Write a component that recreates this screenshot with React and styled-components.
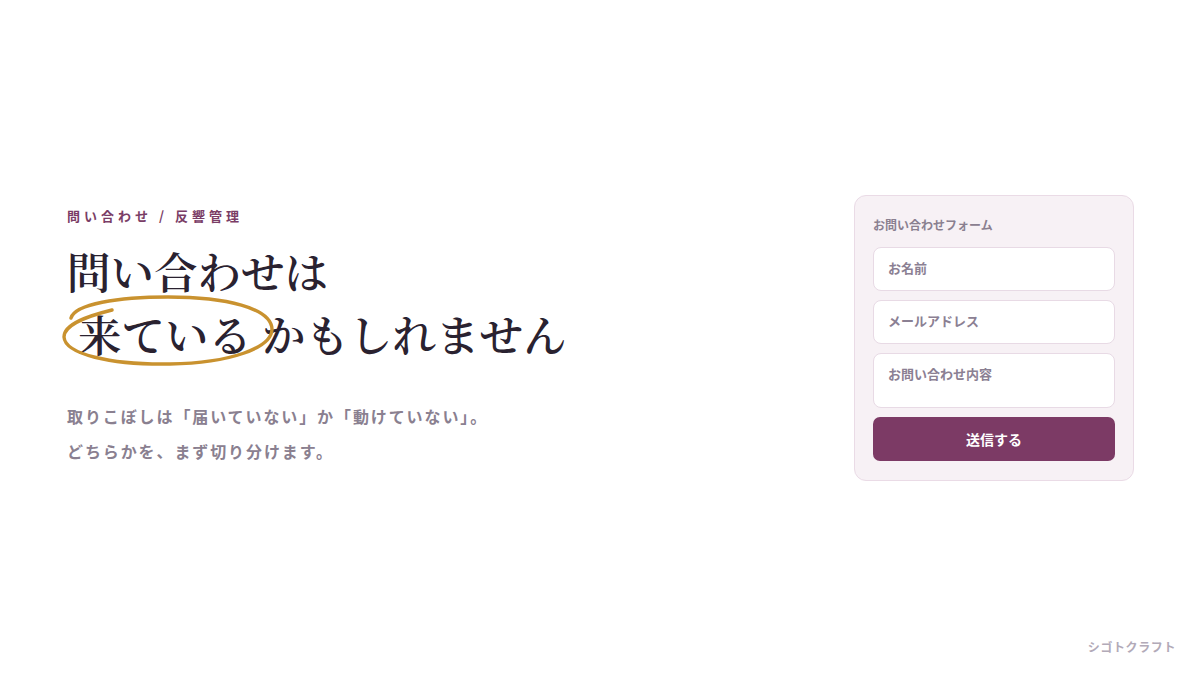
import styled, { createGlobalStyle } from "styled-components";

/* Estilos globales */
const GlobalStyle = createGlobalStyle`
  html, body {
    margin: 0;
    padding: 0;
    background: #ffffff;
  }

  body {
    font-family: "Noto Sans CJK JP", "Noto Sans", sans-serif;
  }
`;

// Contenedor de la pagina
const Page = styled.div`
  position: relative;
  display: flex;
  align-items: center;
  justify-content: space-between;
  box-sizing: border-box;
  min-height: 100vh;
  padding: 0 66px 0 67px;
`;

// Columna izquierda con el texto principal
const Intro = styled.section`
  display: flex;
  flex-direction: column;
`;

const Eyebrow = styled.p`
  margin: 0 0 14px;
  font-size: 13px;
  font-weight: 700;
  letter-spacing: 4px;
  color: #7a3d66;
`;

const Title = styled.h1`
  margin: 0;
  font-family: "Noto Serif CJK JP", "Noto Serif JP", "Noto Sans CJK JP", serif;
  font-size: 43.5px;
  font-weight: 600;
  line-height: 63px;
  color: #2a2230;
  white-space: nowrap;
`;

// Palabra marcada con el circulo dorado
const Marked = styled.span`
  position: relative;
  display: inline-block;
  padding: 0 10px 0 11px;

  svg {
    position: absolute;
    left: -9px;
    top: -11px;
    width: 220px;
    height: 78px;
    overflow: visible;
    pointer-events: none;
  }
`;

const Lead = styled.p`
  margin: 34px 0 0;
  font-size: 16px;
  font-weight: 700;
  line-height: 35px;
  letter-spacing: 1.9px;
  color: #8a8090;
`;

/* Tarjeta del formulario */
const Card = styled.form`
  display: flex;
  flex-direction: column;
  gap: 9px;
  box-sizing: border-box;
  width: 280px;
  padding: 20px 18px 19px;
  background: #f7f1f5;
  border: 1px solid #eadbe6;
  border-radius: 12px;
`;

const CardTitle = styled.h2`
  margin: 0 0 4px;
  font-size: 12px;
  font-weight: 700;
  line-height: 18px;
  color: #8a8090;
`;

const Field = styled.div`
  box-sizing: border-box;
  height: ${(props) => (props.$tall ? "55px" : "44px")};
  padding: 11px 14px;
  background: #ffffff;
  border: 1px solid #e8dae5;
  border-radius: 8px;
  font-size: 13px;
  font-weight: 700;
  line-height: 18px;
  color: #8b8093;
`;

const SubmitButton = styled.button`
  height: 44px;
  border: none;
  border-radius: 7px;
  background: #7c3a65;
  color: #ffffff;
  font-family: inherit;
  font-size: 14px;
  font-weight: 700;
  cursor: pointer;
`;

// Marca en la esquina inferior
const Credit = styled.span`
  position: absolute;
  right: 24px;
  bottom: 20px;
  font-size: 12px;
  font-weight: 700;
  letter-spacing: 0.6px;
  color: #b2aab8;
`;

export default function App() {
  return (
    <>
      <GlobalStyle />
      <Page>
        <Intro>
          <Eyebrow>問い合わせ / 反響管理</Eyebrow>
          <Title>
            問い合わせは
            <br />
            <Marked>
              来ている
              <svg viewBox="0 0 220 78" aria-hidden="true">
                <path
                  d="M54 19 C 30 25, 6 33, 6 46 C 7 63, 52 74, 112 73 C 172 72, 214 57, 214 38 C 213 17, 168 6, 110 6 C 60 6, 17 13, 13 27"
                  fill="none"
                  stroke="#c9922f"
                  strokeWidth="3.4"
                  strokeLinecap="round"
                />
              </svg>
            </Marked>
            かもしれません
          </Title>
          <Lead>
            取りこぼしは「届いていない」か「動けていない」。
            <br />
            どちらかを、まず切り分けます。
          </Lead>
        </Intro>

        <Card onSubmit={(e) => e.preventDefault()}>
          <CardTitle>お問い合わせフォーム</CardTitle>
          <Field>お名前</Field>
          <Field>メールアドレス</Field>
          <Field $tall>お問い合わせ内容</Field>
          <SubmitButton type="submit">送信する</SubmitButton>
        </Card>

        <Credit>シゴトクラフト</Credit>
      </Page>
    </>
  );
}
